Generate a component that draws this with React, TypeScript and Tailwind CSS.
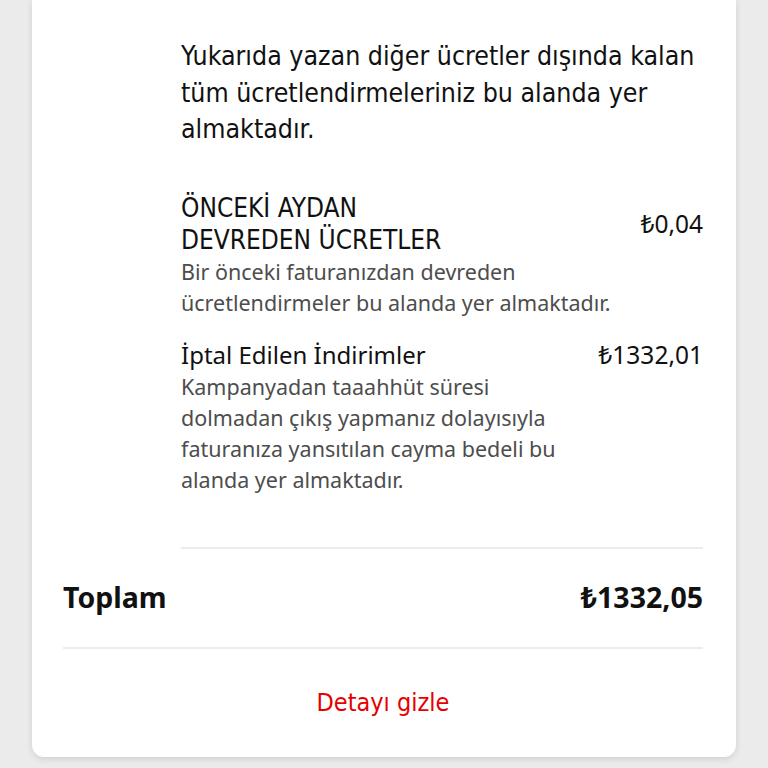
import React from 'react';

const condensed = { fontFamily: '"Liberation Sans Narrow", "DejaVu Sans Condensed", "Liberation Sans", sans-serif' };
const noto = { fontFamily: '"Noto Sans", "Open Sans", sans-serif' };

type Item = { title: string[]; price: string; desc: string[]; condensedTitle?: boolean };

// satırlar referanstaki kırılımla aynı tutuluyor
const items: Item[] = [
  {
    title: ['ÖNCEKİ AYDAN', 'DEVREDEN ÜCRETLER'],
    price: '₺0,04',
    desc: ['Bir önceki faturanızdan devreden', 'ücretlendirmeler bu alanda yer almaktadır.'],
    condensedTitle: true,
  },
  {
    title: ['İptal Edilen İndirimler'],
    price: '₺1332,01',
    desc: [
      'Kampanyadan taaahhüt süresi',
      'dolmadan çıkış yapmanız dolayısıyla',
      'faturanıza yansıtılan cayma bedeli bu',
      'alanda yer almaktadır.',
    ],
  },
];

export default function App() {
  return (
    <div className="min-h-screen bg-[#ebebeb] px-8">
      <div className="bg-white rounded-b-xl shadow-[0_2px_6px_rgba(0,0,0,0.12)] pb-[36px]">
        <div className="pl-[149px] pr-[33px] pt-[38px]">
          <p className="text-[26.5px] leading-[36.5px] text-[#111]" style={condensed}>
            Yukarıda yazan diğer ücretler dışında kalan tüm ücretlendirmeleriniz bu alanda yer almaktadır.
          </p>

          <div className="mt-[44px] flex flex-col gap-[21px]">
            {items.map((it, i) => (
              <div key={i} className="flex items-start">
                <div className="flex-1 whitespace-nowrap">
                  <div
                    className={it.condensedTitle ? 'text-[26px] leading-[32px] text-[#111]' : 'text-[24px] leading-[32px] text-[#111]'}
                    style={it.condensedTitle ? condensed : noto}
                  >
                    {it.title.map((t) => (
                      <span key={t} className="block">{t}</span>
                    ))}
                  </div>
                  <p className="text-[21.5px] leading-[31px] text-[#4d4d4d]" style={noto}>
                    {it.desc.map((d) => (
                      <span key={d} className="block">{d}</span>
                    ))}
                  </p>
                </div>
                <div
                  className={`text-[24.5px] leading-[32px] text-[#111] whitespace-nowrap ${it.condensedTitle ? 'mt-[16px]' : ''}`}
                  style={noto}
                >
                  {it.price}
                </div>
              </div>
            ))}
          </div>

          <div className="mt-[52px] h-[2px] bg-[#ececec]" />
        </div>

        <div className="pr-[33px] pl-[31px]">
          <div className="flex items-center justify-between h-[98px]">
            <span className="text-[28.5px] font-bold text-[#111]" style={noto}>Toplam</span>
            <span className="text-[28.5px] font-bold text-[#111]" style={noto}>₺1332,05</span>
          </div>
          <div className="h-[2px] bg-[#ececec]" />
          <div className="flex justify-center pt-[36px]">
            <button className="text-[25px] leading-[36px] text-[#e60000]" style={condensed}>
              Detayı gizle
            </button>
          </div>
        </div>
      </div>
    </div>
  );
}
